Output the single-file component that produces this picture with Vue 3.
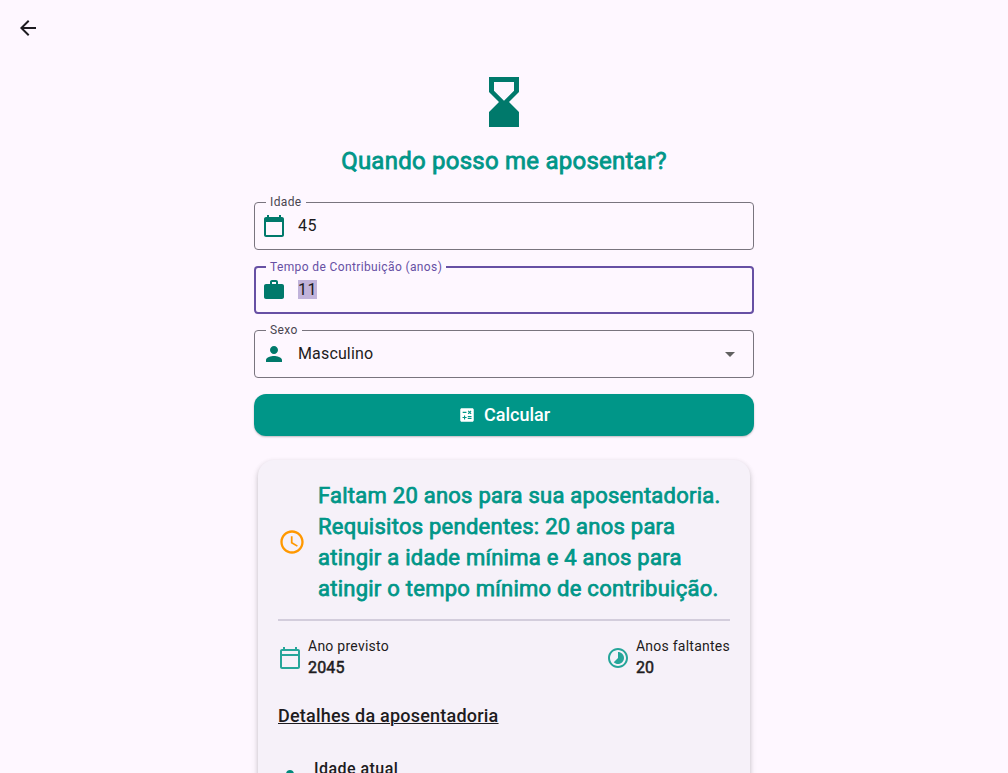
<script setup>
const icons = {
  back: 'M20 11H7.83l5.59-5.59L12 4l-8 8 8 8 1.41-1.41L7.83 13H20v-2z',
  hourglass: 'M18 22l-.01-6L14 12l3.99-4.01L18 2H6v6l4 4-4 3.99V22h12zM8 7.5V4h8v3.5l-4 4-4-4z',
  calendar: 'M20 3h-1V1h-2v2H7V1H5v2H4c-1.1 0-2 .9-2 2v16c0 1.1.9 2 2 2h16c1.1 0 2-.9 2-2V5c0-1.1-.9-2-2-2zm0 18H4V8h16v13z',
  work: 'M20 6h-4V4c0-1.11-.89-2-2-2h-4c-1.11 0-2 .89-2 2v2H4c-1.11 0-1.99.89-1.99 2L2 19c0 1.11.89 2 2 2h16c1.11 0 2-.89 2-2V8c0-1.11-.89-2-2-2zm-6 0h-4V4h4v2z',
  person: 'M12 12c2.21 0 4-1.79 4-4s-1.79-4-4-4-4 1.79-4 4 1.79 4 4 4zm0 2c-2.67 0-8 1.34-8 4v2h16v-2c0-2.66-5.33-4-8-4z',
  drop: 'M7 10l5 5 5-5z',
  calculate: 'M19 3H5c-1.1 0-2 .9-2 2v14c0 1.1.9 2 2 2h14c1.1 0 2-.9 2-2V5c0-1.1-.9-2-2-2zm-5.97 4.06L14.09 6l1.41 1.41L16.91 6l1.06 1.06-1.41 1.41 1.41 1.41-1.06 1.06-1.41-1.4-1.41 1.41-1.06-1.06 1.41-1.41-1.41-1.42zm-6.78.66h5v1.5h-5v-1.5zM11.5 16h-2v2H8v-2H6v-1.5h2v-2h1.5v2h2V16zm6.5 1.25h-5v-1.5h5v1.5zm0-2.5h-5v-1.5h5v1.5z',
  clock: 'M11.99 2C6.47 2 2 6.48 2 12s4.47 10 9.99 10C17.52 22 22 17.52 22 12S17.52 2 11.99 2zM12 20c-4.42 0-8-3.58-8-8s3.58-8 8-8 8 3.58 8 8-3.58 8-8 8zm.5-13H11v6l5.25 3.15.75-1.23-4.5-2.67z',
  calendarOutlined: 'M20 3h-1V1h-2v2H7V1H5v2H4c-1.1 0-2 .9-2 2v16c0 1.1.9 2 2 2h16c1.1 0 2-.9 2-2V5c0-1.1-.9-2-2-2zm0 18H4V10h16v11zm0-13H4V5h16v3z',
  timelapse: 'M16.24 7.76C15.07 6.59 13.54 6 12 6v6l-4.24 4.24c2.34 2.34 6.14 2.34 8.49 0 2.34-2.34 2.34-6.14-.01-8.48zM12 2C6.48 2 2 6.48 2 12s4.48 10 10 10 10-4.48 10-10S17.52 2 12 2zm0 18c-4.42 0-8-3.58-8-8s3.58-8 8-8 8 3.58 8 8-3.58 8-8 8z',
}

const fields = [
  { label: 'Idade', value: '45', icon: 'calendar' },
  { label: 'Tempo de Contribuição (anos)', value: '11', icon: 'work', focused: true },
  { label: 'Sexo', value: 'Masculino', icon: 'person', select: true },
]

const message = [
  'Faltam 20 anos para sua aposentadoria.',
  'Requisitos pendentes: 20 anos para',
  'atingir a idade mínima e 4 anos para',
  'atingir o tempo mínimo de contribuição.',
]

const stats = [
  { label: 'Ano previsto', value: '2045', icon: 'calendarOutlined' },
  { label: 'Anos faltantes', value: '20', icon: 'timelapse' },
]
</script>

<template>
  <div class="page">
    <header class="bar">
      <svg class="icon" viewBox="0 0 24 24"><path :d="icons.back" /></svg>
    </header>
    <main class="content">
      <svg class="hourglass" viewBox="0 0 24 24"><path :d="icons.hourglass" /></svg>
      <h1 class="title">Quando posso me aposentar?</h1>

      <fieldset v-for="f in fields" :key="f.label" class="field" :class="{ focused: f.focused }">
        <legend class="label">{{ f.label }}</legend>
        <div class="control">
          <svg class="icon" viewBox="0 0 24 24"><path :d="icons[f.icon]" /></svg>
          <span class="value" :class="{ selected: f.focused, choice: f.select }">{{ f.value }}</span>
          <svg v-if="f.select" class="icon arrow" viewBox="0 0 24 24"><path :d="icons.drop" /></svg>
        </div>
      </fieldset>

      <button class="submit">
        <svg viewBox="0 0 24 24"><path :d="icons.calculate" /></svg>
        <span>Calcular</span>
      </button>

      <section class="card">
        <div class="result">
          <svg class="clock" viewBox="0 0 24 24"><path :d="icons.clock" /></svg>
          <div class="message">
            <div v-for="line in message" :key="line">{{ line }}</div>
          </div>
        </div>
        <div class="divider"></div>
        <div class="stats">
          <div v-for="s in stats" :key="s.label" class="stat">
            <svg class="icon" viewBox="0 0 24 24"><path :d="icons[s.icon]" /></svg>
            <div>
              <div class="stat-label">{{ s.label }}</div>
              <div class="stat-value">{{ s.value }}</div>
            </div>
          </div>
        </div>
        <h2 class="subtitle">Detalhes da aposentadoria</h2>
        <div class="detail">
          <svg class="icon" viewBox="0 0 24 24"><path :d="icons.person" /></svg>
          <div class="detail-name">Idade atual</div>
        </div>
      </section>
    </main>
  </div>
</template>

<style>
body {
  background: #fef7ff;
}
</style>

<style scoped>
.page {
  height: 773px;
  overflow: hidden;
  background: #fef7ff;
  color: #1d1b20;
  font-family: Roboto, sans-serif;
  box-sizing: border-box;
}
.page * {
  box-sizing: border-box;
}
svg {
  display: block;
  flex: none;
  fill: currentColor;
}
.icon {
  width: 24px;
  height: 24px;
}
.bar {
  height: 56px;
  padding: 16px;
}
.content {
  width: 500px;
  margin: 0 auto;
  padding-top: 16px;
}
.hourglass {
  width: 60px;
  height: 60px;
  margin: 0 auto;
  color: #00796b;
}
.title {
  margin: 13px 0 0;
  text-align: center;
  font-size: 24px;
  line-height: 32px;
  font-weight: 400;
  letter-spacing: 0.24px;
  color: #009688;
  -webkit-text-stroke: 0.8px #009688;
  white-space: nowrap;
}
.field {
  height: 55px;
  min-width: 0;
  margin: 18px 0 0;
  padding: 0;
  border: 1px solid #79747e;
  border-radius: 4px;
}
.field + .field {
  margin-top: 9px;
}
.label {
  height: 14px;
  margin-left: 11px;
  padding: 0 4px;
  font-size: 12px;
  line-height: 14px;
  letter-spacing: 0.375px;
  color: #49454f;
}
.control {
  display: flex;
  align-items: center;
  height: 33px;
  padding: 0 11px 0 7px;
  color: #00796b;
}
.value {
  margin-left: 12px;
  font-size: 16px;
  line-height: 19px;
  letter-spacing: 0.5px;
  color: #1d1b20;
}
.value.choice {
  letter-spacing: 0.15px;
}
.arrow {
  margin-left: auto;
  color: #616161;
}
.field.focused {
  height: 54px;
  margin-top: 10px;
  border: 2px solid #6750a4;
}
.focused .label {
  margin-left: 10px;
  color: #6750a4;
}
.focused .control {
  height: 31px;
  padding-left: 6px;
}
.selected {
  background: #c1b3db;
}
.submit {
  display: flex;
  align-items: center;
  justify-content: center;
  gap: 8px;
  width: 500px;
  height: 42px;
  margin-top: 16px;
  padding: 0;
  border: 0;
  border-radius: 12px;
  background: #009688;
  color: #fff;
  font: 500 18px/24px Roboto, sans-serif;
  box-shadow: 0 1px 2px rgba(0, 0, 0, 0.25);
}
.submit svg {
  width: 18px;
  height: 18px;
}
.card {
  height: 500px;
  margin: 24px 4px 0;
  padding: 20px;
  border-radius: 16px;
  background: #f6f1f9;
  box-shadow: 0 2px 5px rgba(0, 0, 0, 0.18), 0 4px 8px rgba(0, 0, 0, 0.08);
}
.result {
  display: flex;
  align-items: center;
  gap: 12px;
}
.clock {
  width: 28px;
  height: 28px;
  color: #ff9800;
}
.message {
  font-size: 22px;
  line-height: 31px;
  letter-spacing: 0.25px;
  color: #009688;
  -webkit-text-stroke: 0.75px #009688;
  white-space: nowrap;
}
.divider {
  height: 2px;
  margin-top: 15px;
  background: #d3cddc;
}
.stats {
  display: flex;
  justify-content: space-between;
  margin-top: 15px;
}
.stat {
  display: flex;
  align-items: center;
  gap: 6px;
}
.stat .icon {
  color: #26a69a;
}
.stat-label {
  font-size: 14px;
  line-height: 20px;
  letter-spacing: 0.25px;
}
.stat-value {
  font-size: 16px;
  line-height: 24px;
  letter-spacing: 0.15px;
  -webkit-text-stroke: 0.5px #1d1b20;
}
.subtitle {
  margin: 22px 0 0;
  font-size: 18px;
  line-height: 28px;
  font-weight: 500;
  letter-spacing: 0.22px;
  text-decoration: underline;
  text-decoration-thickness: 1px;
}
.detail {
  display: flex;
  align-items: flex-start;
  gap: 12px;
  margin-top: 27px;
}
.detail .icon {
  margin-top: 9px;
  color: #00897b;
}
.detail-name {
  font-size: 16px;
  line-height: 24px;
  font-weight: 500;
  letter-spacing: 0.45px;
}
</style>
